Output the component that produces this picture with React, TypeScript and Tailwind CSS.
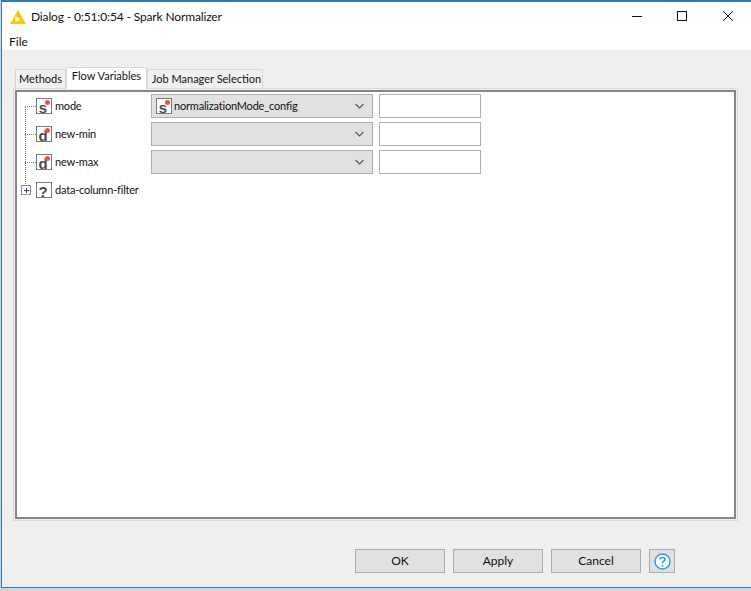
import type { ReactNode } from "react";

const rows = [
  { type: "s", name: "mode", value: "normalizationMode_config" },
  { type: "d", name: "new-min", value: "" },
  { type: "d", name: "new-max", value: "" },
];

function TypeIcon({ type, flagged = true }: { type: string; flagged?: boolean }) {
  return (
    <span className="relative flex h-[16px] w-[16px] shrink-0 items-center justify-center border border-[#7a7a7a] bg-white pt-[2px] pr-[2px] font-['Liberation_Sans',sans-serif] text-[15px] leading-none font-bold text-[#4a4a4a]">
      {type}
      {flagged && (
        <span className="absolute top-[1px] right-[1px] h-[5px] w-[5px] rounded-full bg-[#f5484a]" />
      )}
    </span>
  );
}

function Chevron() {
  return (
    <svg width="9" height="6" viewBox="0 0 9 6" className="shrink-0">
      <path d="M0.5 1 L4.5 5 L8.5 1" fill="none" stroke="#555" strokeWidth="1.1" />
    </svg>
  );
}

function Row({ type, name, value }: { type: string; name: string; value: string }) {
  return (
    <div className="flex h-[24px] items-center">
      <span className="h-0 w-[11px] border-t border-dotted border-[#777]" />
      <TypeIcon type={type} />
      <span className="ml-[3px] w-[96px] pb-[2px] text-[11px] tracking-[-0.2px]">{name}</span>
      <div className="flex h-full w-[222px] items-center border border-[#adadad] bg-[#e1e1e1] pr-[8px] pl-[4px]">
        {value && <TypeIcon type={type} />}
        <span className="ml-[2px] flex-1 pb-[2px] text-[11px] tracking-[-0.2px]">{value}</span>
        <Chevron />
      </div>
      <div className="ml-[6px] h-full w-[102px] border border-[#adadad] bg-white" />
    </div>
  );
}

function Tab({ active, children, className }: { active?: boolean; children: ReactNode; className: string }) {
  return (
    <div
      className={
        active
          ? `z-10 -mb-[1px] flex h-[22px] items-start justify-center border border-b-0 border-[#d9d9d9] bg-white pt-[2px] text-[11px] whitespace-nowrap ${className}`
          : `flex h-[19px] items-center justify-center border border-b-0 border-[#d9d9d9] bg-[#f0f0f0] pb-[2px] text-[11px] whitespace-nowrap ${className}`
      }
    >
      {children}
    </div>
  );
}

function Button({ children }: { children: ReactNode }) {
  return (
    <button
      type="button"
      className="flex h-[24px] w-[90px] items-center justify-center border border-[#adadad] bg-[#e1e1e1]"
    >
      {children}
    </button>
  );
}

export default function App() {
  return (
    <div className="flex h-[591px] w-[751px] flex-col overflow-hidden bg-[#d4d4d4] font-['Lato',sans-serif] text-[12px] leading-none text-[#111]">
      <div className="ml-[1px] flex h-[588px] flex-col border-t-2 border-b border-l border-[#2f7cbd] bg-[#efefef]">
        {/* title bar */}
        <div className="flex h-[30px] items-center bg-white pl-[8px]">
          <svg width="16" height="14" viewBox="0 0 16 14" className="shrink-0">
            <path d="M8 0 L16 14 L0 14 Z" fill="#fdc70c" />
            <path d="M5.5 12 L5.5 6.5 L10.5 9.5 Z" fill="#fff" />
          </svg>
          <span className="ml-[5px] tracking-[-0.14px]">Dialog - 0:51:0:54 - Spark Normalizer</span>
          <div className="-mt-[2px] ml-auto flex items-center">
            <svg width="10" height="10" viewBox="0 0 10 10" className="mr-[35px]">
              <path d="M0 5.5 H10" stroke="#111" strokeWidth="1" />
            </svg>
            <svg width="10" height="10" viewBox="0 0 10 10" className="mr-[36px]">
              <rect x="0.5" y="0.5" width="9" height="9" fill="none" stroke="#111" strokeWidth="1" />
            </svg>
            <svg width="10" height="10" viewBox="0 0 10 10" className="mr-[18px]">
              <path d="M0 0 L10 10 M10 0 L0 10" stroke="#111" strokeWidth="1" />
            </svg>
          </div>
        </div>
        {/* menu */}
        <div className="flex h-[18px] items-start bg-white pt-[4px] pl-[7px]">File</div>

        {/* tabs */}
        <div className="flex h-[38px] items-end pl-[13px]">
          <Tab className="w-[51px]">Methods</Tab>
          <Tab active className="w-[81px]">Flow Variables</Tab>
          <Tab className="w-[116px] pl-[3px]">Job Manager Selection</Tab>
        </div>

        {/* panel */}
        <div className="ml-[11px] h-[433px] w-[725px] border border-[#d9d9d9] p-[1px]">
          <div className="relative h-full border-2 border-[#85868c] bg-white pt-[2px] pl-[8px]">
            <div className="absolute top-[14px] left-[8px] h-[80px] border-l border-dotted border-[#777]" />
            <div className="flex flex-col gap-[4px]">
              {rows.map((r) => (
                <Row key={r.name} {...r} />
              ))}
              <div className="flex h-[24px] items-center">
                <span className="relative z-10 -ml-[4px] flex h-[10px] w-[10px] shrink-0 items-center justify-center border border-[#8d8d9d] bg-white">
                  <svg width="7" height="7" viewBox="0 0 7 7">
                    <path d="M1 3.5 H6 M3.5 1 V6" stroke="#2a3f7a" strokeWidth="1" />
                  </svg>
                </span>
                <span className="ml-[5px]">
                  <TypeIcon type="?" flagged={false} />
                </span>
                <span className="ml-[3px] pb-[2px] text-[11px] tracking-[-0.2px]">data-column-filter</span>
              </div>
            </div>
          </div>
        </div>

        {/* buttons */}
        <div className="mt-[28px] flex items-start gap-[8px] pl-[353px]">
          <Button>OK</Button>
          <Button>Apply</Button>
          <Button>Cancel</Button>
          <div className="flex h-[24px] w-[26px] items-center justify-center border border-[#adadad] bg-[#e1e1e1]">
            <svg width="17" height="17" viewBox="0 0 17 17">
              <circle cx="8.5" cy="8.5" r="7.5" fill="#fff" stroke="#2a9df4" strokeWidth="1.5" />
              <path d="M6 6.5 C6 3.8 11 3.8 11 6.5 C11 8.3 8.5 8.2 8.5 10.3" fill="none" stroke="#2a9df4" strokeWidth="1.6" />
              <circle cx="8.5" cy="12.8" r="1" fill="#2a9df4" />
            </svg>
          </div>
        </div>
      </div>
    </div>
  );
}
